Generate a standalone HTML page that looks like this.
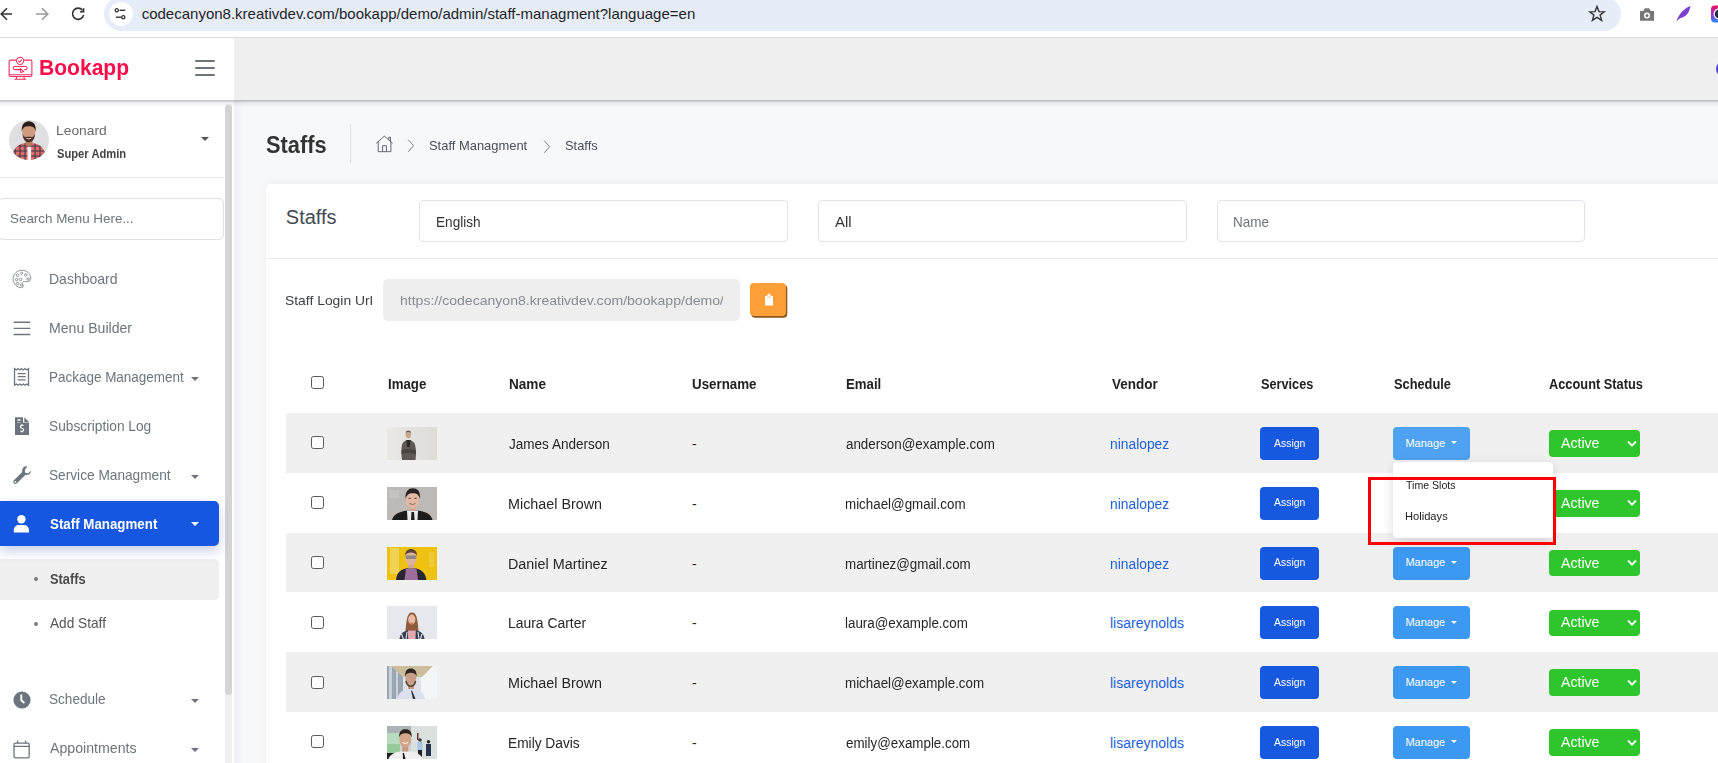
<!DOCTYPE html>
<html><head><meta charset="utf-8">
<style>
html,body{margin:0;padding:0;width:1718px;height:763px;overflow:hidden;background:#f6f8fc;font-family:"Liberation Sans",sans-serif;}
.a{position:absolute;}
.t{position:absolute;white-space:nowrap;line-height:1;font-family:"Liberation Sans",sans-serif;z-index:5;}
.cb{position:absolute;width:11px;height:11px;border:1.3px solid #5a5a5a;border-radius:2.5px;background:#fff;z-index:4;}
.row{position:absolute;left:286px;width:1432px;height:59.8px;}
.g{background:#f0f0f0;}
.thumb{position:absolute;left:387px;width:50px;height:33px;z-index:4;overflow:hidden;}
.assign{position:absolute;left:1260px;width:59px;height:33px;background:#1758e0;border-radius:4px;z-index:4;}
.manage{position:absolute;left:1393px;width:77px;height:33px;background:#3d98f2;border-radius:4px;z-index:4;}
.mcaret{position:absolute;left:1450.5px;margin-top:-0.8px;width:0;height:0;border-left:3px solid transparent;border-right:3px solid transparent;border-top:3.5px solid #fff;z-index:6;}
.active{position:absolute;left:1549px;width:91px;height:26.6px;background:#2fc52c;border-radius:4px;z-index:4;}
.chev{position:absolute;left:1627px;z-index:6;}
.caret{position:absolute;width:0;height:0;border-left:4px solid transparent;border-right:4px solid transparent;border-top:4.5px solid #6c757d;z-index:5;}
.inp{position:absolute;top:200px;height:40px;border:1px solid #e1e3ea;border-radius:4px;background:#fff;}
.mi{position:absolute;left:12px;z-index:5;}
</style></head><body>
<!-- ================= BROWSER BAR ================= -->
<div class="a" style="left:0;top:0;width:1718px;height:37px;background:#fff;"></div>
<div class="a" style="left:0;top:37px;width:1718px;height:1px;background:#d9dbd9;"></div>
<svg class="a" style="left:0;top:6px" width="100" height="16" viewBox="0 0 100 16">
  <path d="M12 8H1.5M7 2.2L1.2 8L7 13.8" stroke="#333" stroke-width="1.6" fill="none" stroke-linecap="butt"/>
  <path d="M36 8H47.5M42 2.2L47.8 8L42 13.8" stroke="#9a9a9a" stroke-width="1.6" fill="none"/>
  <path d="M82.5 4.2A5.6 5.6 0 1 0 83.6 9" stroke="#333" stroke-width="1.6" fill="none"/>
  <path d="M83.6 2.2V5.8H80" stroke="#333" stroke-width="1.6" fill="none"/>
</svg>
<div class="a" style="left:104px;top:-3px;width:1517px;height:34px;background:#e6ecf8;border-radius:17px;"></div>
<div class="a" style="left:109px;top:2px;width:24px;height:24px;background:#fff;border-radius:50%;"></div>
<svg class="a" style="left:113px;top:6px" width="16" height="16" viewBox="0 0 16 16">
  <circle cx="3.8" cy="4.3" r="1.6" stroke="#333" stroke-width="1.3" fill="none"/>
  <path d="M6.6 4.3H12.3" stroke="#333" stroke-width="1.4"/>
  <circle cx="10.3" cy="11.2" r="1.6" stroke="#333" stroke-width="1.3" fill="none"/>
  <path d="M2.8 11.2H8.2" stroke="#333" stroke-width="1.4"/>
</svg>
<svg class="a" style="left:1588px;top:5px" width="18" height="17" viewBox="0 0 18 17">
  <path d="M9 1.5L11 6.6L16.3 6.8L12.1 10.1L13.6 15.3L9 12.3L4.4 15.3L5.9 10.1L1.7 6.8L7 6.6Z" stroke="#333" stroke-width="1.4" fill="none" stroke-linejoin="miter"/>
</svg>
<svg class="a" style="left:1639px;top:7px" width="16" height="15" viewBox="0 0 16 15">
  <path d="M1 4H4.3L6 1.2H10L11.7 4H15V13.8H1Z" fill="#777"/>
  <circle cx="8" cy="8.6" r="3" fill="#fff"/><circle cx="8" cy="8.6" r="1.5" fill="#777"/>
</svg>
<svg class="a" style="left:1675px;top:5px" width="17" height="18" viewBox="0 0 17 18">
  <path d="M15.5 1C11 2.5 6 6.5 2.5 13.5L1.2 17C3 14.5 5 13 7.5 12.5C11.5 11 14.5 7 15.5 1Z" fill="#7c3fd1"/>
</svg>
<svg class="a" style="left:1710px;top:5px" width="8" height="18" viewBox="0 0 8 18">
  <defs><linearGradient id="ig" x1="0" y1="0" x2="0" y2="1"><stop offset="0" stop-color="#f0145a"/><stop offset="0.5" stop-color="#a02ad8"/><stop offset="1" stop-color="#1e90ff"/></linearGradient></defs>
  <rect x="1" y="0.5" width="16" height="17" rx="4" fill="url(#ig)"/>
  <circle cx="9" cy="9" r="5.5" fill="#fff"/><circle cx="9" cy="9" r="4.3" fill="#263040"/>
</svg>
<!-- ================= APP CHROME ================= -->
<div class="a" style="left:0;top:38px;width:234px;height:725px;background:#fff;"></div>
<div class="a" style="left:234px;top:38px;width:1484px;height:62px;background:#f0f0f0;"></div>
<div class="a" style="left:234px;top:100px;width:1484px;height:663px;background:#f6f8fc;"></div>
<div class="a" style="left:234px;top:100px;width:10px;height:663px;background:linear-gradient(90deg,rgba(0,0,40,0.035),rgba(0,0,40,0));"></div>
<div class="a" style="left:0;top:100px;width:1718px;height:7px;z-index:3;background:linear-gradient(180deg,rgba(40,45,60,0.30) 0,rgba(40,45,60,0.26) 1px,rgba(40,45,60,0.13) 2px,rgba(40,45,60,0.06) 3.5px,rgba(40,45,60,0) 7px);"></div>
<div class="a" style="left:1716px;top:60px;width:18px;height:18px;border:2px solid #4b45d6;border-radius:50%;box-sizing:border-box;"></div>
<!-- logo -->
<svg class="a" style="left:8px;top:56px;z-index:5" width="26" height="26" viewBox="0 0 26 26">
  <g stroke="#ff2c5e" stroke-width="1.05" fill="none" stroke-linecap="round" stroke-linejoin="round">
    <path d="M8 4.1H2.6C1.7 4.1 1.1 4.7 1.1 5.6V19C1.1 19.8 1.7 20.4 2.6 20.4H22.4C23.3 20.4 23.9 19.8 23.9 19V5.6C23.9 4.7 23.3 4.1 22.4 4.1H16.3"/>
    <path d="M1.3 18.8H23.7"/>
    <circle cx="12.1" cy="4.8" r="3.6"/>
    <path d="M10.6 5.2L11.7 6.1L13.6 3.8"/>
    <path d="M12.3 13.6H6.7C5.8 13.6 5.2 12.9 5.2 12C5.2 11.1 5.8 10.4 6.7 10.4H17.6C18.5 10.4 19.1 11.1 19.1 12C19.1 12.9 18.5 13.6 17.6 13.6H16.8"/>
    <path d="M12.2 12.6L12.6 16.4L15.8 15.6Z"/>
    <path d="M8.4 20.4V23M16.1 20.4V23M6.7 23.3H17.8"/>
  </g>
</svg>
<div class="a" style="left:195px;top:60.4px;width:20px;height:2px;background:#6c757d;border-radius:1px;"></div>
<div class="a" style="left:195px;top:67.1px;width:20px;height:2px;background:#6c757d;border-radius:1px;"></div>
<div class="a" style="left:195px;top:73.9px;width:20px;height:2px;background:#6c757d;border-radius:1px;"></div>
<!-- avatar -->
<svg class="a" style="left:9px;top:120px" width="40" height="40" viewBox="0 0 40 40">
  <defs><clipPath id="av"><circle cx="20" cy="20" r="20"/></clipPath>
  <pattern id="plaid" width="5" height="5" patternUnits="userSpaceOnUse"><rect width="5" height="5" fill="#e36a6a"/><rect x="0" y="0" width="2" height="5" fill="#5b4a55" opacity="0.75"/><rect x="0" y="0" width="5" height="2" fill="#4a3a45" opacity="0.55"/></pattern>
  <filter id="avb"><feGaussianBlur stdDeviation="0.35"/></filter></defs>
  <g clip-path="url(#av)">
    <rect width="40" height="40" fill="#e0e0e2"/>
    <g filter="url(#avb)">
    <path d="M3 40C3 30 7 25.5 14 23.5L20 22.5L26 23.5C33 25.5 37 30 37 40Z" fill="url(#plaid)"/>
    <path d="M18.3 27H22.2L22 40H18.6Z" fill="#f2f2f2"/>
    <path d="M16.5 19H23.5V25L20 27L16.5 25Z" fill="#b47c62"/>
    <ellipse cx="19.8" cy="11.5" rx="6.6" ry="8.2" fill="#d09a7c"/>
    <path d="M13.6 13.5C13.8 19 15.6 21.8 19.8 22.2C24 21.8 25.8 19 26 13.5C25.2 16 24.2 17.2 22.4 17C21 16.8 18.6 16.8 17.2 17C15.4 17.2 14.4 16 13.6 13.5Z" fill="#3a2620" opacity="0.9"/>
    <path d="M12.8 12C12.2 4.5 15.5 1.2 19.8 1.2C24.3 1.2 27.4 4.5 26.8 12C26 8 24.5 6.3 19.8 6.3C15 6.3 13.6 8 12.8 12Z" fill="#2a1c17"/>
    <path d="M17.4 18.3Q19.8 19.6 22.2 18.3" stroke="#f4e4dc" stroke-width="0.9" fill="none"/>
    </g>
  </g>
</svg>
<div class="caret" style="left:201px;top:136.5px;border-top-color:#555;"></div>
<div class="a" style="left:0;top:177px;width:224px;height:1px;background:#e9e9ef;"></div>
<div class="a" style="left:-2px;top:198px;width:224px;height:40px;border:1px solid #dfe0e8;border-radius:5px;"></div>
<!-- scrollbar -->
<div class="a" style="left:225px;top:104px;width:7px;height:659px;background:#f0f0f0;"></div>
<div class="a" style="left:225px;top:105px;width:7px;height:590px;background:#d4d4d4;border-radius:4px;"></div>
<!-- menu icons -->
<svg class="mi" style="top:269px" width="20" height="20" viewBox="0 0 20 20">
  <g stroke="#858b92" stroke-width="0.9" fill="none">
    <path d="M10 1.3C5 1.3 1.2 5 1.2 9.8C1.2 15 5 18.7 9.6 18.7C11.6 18.7 11.4 16.8 10.6 15.6C9.6 14.3 10.4 12.4 12.2 12.6H15.6C17.6 12.6 18.8 11.2 18.8 9.6C18.8 5 15 1.3 10 1.3Z"/>
    <circle cx="5.6" cy="6.3" r="1.3"/><circle cx="9.7" cy="4.3" r="1.1"/><circle cx="13.8" cy="5.9" r="1.3"/>
    <circle cx="4.6" cy="10.6" r="1.2"/><circle cx="8.6" cy="10.5" r="1.3"/><circle cx="5.7" cy="14.5" r="1.3"/><circle cx="9.7" cy="16" r="1.2"/><circle cx="16.1" cy="10" r="1.2"/>
  </g>
</svg>
<svg class="mi" style="top:321px" width="20" height="16" viewBox="0 0 20 16">
  <path d="M1.7 1.3H18.2M1.7 7.4H18.2M1.7 13.5H18.2" stroke="#6c757d" stroke-width="1.4"/>
</svg>
<svg class="mi" style="top:367px" width="20" height="20" viewBox="0 0 20 20">
  <g stroke="#6c757d" stroke-width="1.3" fill="none">
    <path d="M2.5 18.2V1.6L4.3 3L6 1.6L7.8 3L9.5 1.6L11.3 3L13 1.6L14.8 3L16.5 1.6V18.2L14.8 17L13 18.2L11.3 17L9.5 18.2L7.8 17L6 18.2L4.3 17Z"/>
    <path d="M5.7 6.6H13.7M5.7 9.7H13.7M5.7 12.8H13.7"/>
  </g>
</svg>
<svg class="mi" style="top:416px" width="20" height="20" viewBox="0 0 20 20">
  <path d="M3 1.3H11V6.6H17V18.9H3Z" fill="#6c757d"/>
  <path d="M12.3 1.3L17 6H12.3Z" fill="#6c757d"/>
  <path d="M5.5 3.2H8.5V4.8H5.5ZM5.5 5.9H8.5V6.6H5.5Z" fill="#fff"/>
  <path d="M11.6 9.5C10 8.8 8.3 9.4 8.4 10.9C8.5 12.5 11.7 12 11.7 13.8C11.7 15.3 9.9 15.7 8.3 14.9M10 8.1V9.1M10 15.3V16.6" stroke="#fff" stroke-width="1.1" fill="none"/>
</svg>
<svg class="mi" style="top:465px" width="20" height="20" viewBox="0 0 20 20">
  <path d="M14.5 1.2C11.5 1.3 9.6 4 10.3 6.9L1.9 15.3C1.1 16.1 1.1 17.5 1.9 18.3C2.7 19.1 4.1 19.1 4.9 18.3L13.3 9.9C16.2 10.6 19 8.7 19 5.7L16.2 8.3L13.3 7.9L12.7 5.1L15.4 1.6C15.1 1.3 14.8 1.2 14.5 1.2Z" fill="#6c757d"/>
  <circle cx="3.4" cy="16.8" r="0.9" fill="#fff"/>
</svg>
<div class="a" style="left:0;top:501px;width:219px;height:45px;background:#1557e0;border-radius:0 5px 5px 0;box-shadow:0 5px 12px rgba(30,55,150,0.24);z-index:2;"></div>
<svg class="mi" style="top:514px;left:13px" width="18" height="20" viewBox="0 0 18 20">
  <circle cx="8.4" cy="5.2" r="4.2" fill="#fff"/>
  <path d="M0.8 18.6V16.5C0.8 13 3 11 6.2 11H10.6C13.8 11 16 13 16 16.5V18.6Z" fill="#fff"/>
</svg>
<div class="a" style="left:0;top:559px;width:219px;height:40.5px;background:#f0f0f0;border-radius:0 5px 5px 0;"></div>
<div class="a" style="left:34px;top:577px;width:4px;height:4px;background:#7a7a7a;border-radius:50%;z-index:5;"></div>
<div class="a" style="left:34px;top:621.5px;width:4px;height:4px;background:#7a7a7a;border-radius:50%;z-index:5;"></div>
<svg class="mi" style="top:691px;left:12.5px" width="18" height="18" viewBox="0 0 18 18">
  <circle cx="9" cy="9" r="8.6" fill="#6c757d"/>
  <path d="M8.3 3.6V9.3L11.4 12" stroke="#fff" stroke-width="1.9" fill="none"/>
</svg>
<svg class="mi" style="top:740px;left:13px" width="18" height="19" viewBox="0 0 18 19">
  <g stroke="#6c757d" stroke-width="1.3" fill="none">
    <rect x="1" y="3.2" width="15.2" height="14.6" rx="1.4"/>
    <path d="M1 6.3H16.2M4.6 0.5V3.6M12.6 0.5V3.6"/>
  </g>
</svg>
<div class="caret" style="left:191px;top:376.5px;"></div>
<div class="caret" style="left:191px;top:474.5px;"></div>
<div class="caret" style="left:191px;top:522px;border-top-color:#fff;"></div>
<div class="caret" style="left:191px;top:698.5px;"></div>
<div class="caret" style="left:191px;top:747.5px;"></div>
<!-- ================= PAGE HEADER ================= -->
<div class="a" style="left:350px;top:124px;width:1px;height:39px;background:#dedfe3;"></div>
<svg class="a" style="left:375px;top:134px" width="19" height="19" viewBox="0 0 19 19">
  <g stroke="#5d6269" stroke-width="0.95" fill="none">
    <path d="M1.3 9.3L9.3 2.1L17.6 9.3M3.2 7.7V17.7H15.9V7.7M7.6 17.7V11.7H11.4V17.7M13.8 5.7V3.2H15.5V7.2"/>
  </g>
</svg>
<svg class="a" style="left:407px;top:139px" width="8" height="14" viewBox="0 0 8 14">
  <path d="M1.2 0.6L6.6 6.7L1.2 12.8" stroke="#7a7f86" stroke-width="1" fill="none"/>
</svg>
<svg class="a" style="left:542.5px;top:139.5px" width="8" height="14" viewBox="0 0 8 14">
  <path d="M1.2 0.6L6.6 6.7L1.2 12.8" stroke="#7a7f86" stroke-width="1" fill="none"/>
</svg>
<!-- ================= CARD ================= -->
<div class="a" style="left:266px;top:184px;width:1470px;height:600px;background:#fff;border-radius:5px;box-shadow:0 -2px 10px rgba(20,30,60,0.035);"></div>
<div class="a" style="left:266px;top:258px;width:1452px;height:1px;background:#e8e8ec;"></div>
<div class="inp" style="left:419px;width:367px;"></div>
<div class="inp" style="left:818px;width:367px;"></div>
<div class="inp" style="left:1217px;width:366px;"></div>
<div class="a" style="left:383px;top:279px;width:357px;height:42px;background:#eeeeee;border-radius:5px;z-index:4;"></div>
<div class="a" style="left:723px;top:285px;width:12px;height:30px;background:#eeeeee;z-index:7;"></div>
<div class="a" style="left:750px;top:283px;width:36.4px;height:33.2px;background:#ff9f38;border-radius:4px;box-shadow:1.3px 1.7px 0 #8d561c;z-index:4;"></div>
<svg class="a" style="left:764px;top:293px;z-index:5" width="10" height="14" viewBox="0 0 10 14">
  <path d="M1 3H9V12.5H1Z" fill="#fff"/><path d="M3 1.8H7V3.6H3Z" fill="#fff"/><path d="M4.3 0.6H5.7V2H4.3Z" fill="#fff"/>
  <path d="M3.2 4.2H6.8" stroke="#ff9f38" stroke-width="0.7"/>
</svg>
<!-- ================= TABLE ================= -->
<div class="cb" style="left:311px;top:376px;"></div>
<div class="row g" style="top:413.0px;"></div>
<div class="cb" style="left:311px;top:436.3px;"></div>
<div class="thumb" style="top:427.0px;"><svg width="50" height="33" viewBox="0 0 50 33"><defs><filter id="b0" x="-10%" y="-10%" width="120%" height="120%"><feGaussianBlur stdDeviation="0.5"/></filter><linearGradient id="jg" x1="0" x2="1"><stop offset="0" stop-color="#ebe9e5"/><stop offset="1" stop-color="#dedcd8"/></linearGradient></defs><rect width="50" height="33" fill="url(#jg)"/><g filter="url(#b0)"><path d="M15 33C14 26 14 17 16.5 15L19.5 13H23.5L26.5 15C29 17 29.5 26 28.5 33Z" fill="#5f5955"/><path d="M19.5 13H23.5L22.8 20H20.2Z" fill="#2a2a2a"/><path d="M14.5 23.5C18 21.8 25 21.8 29 23.5V27C25 25.5 18 25.5 14.5 27Z" fill="#4a4541"/><ellipse cx="21.4" cy="7.6" rx="2.7" ry="3.6" fill="#c9a58e"/><path d="M18.7 6.6C18.7 4.2 20 3.6 21.4 3.6C22.8 3.6 24.1 4.2 24.1 6.6C23.4 5.4 22.5 5 21.4 5C20.3 5 19.4 5.4 18.7 6.6Z" fill="#6f6055"/></g></svg></div>
<div class="assign" style="top:427.0px;"></div>
<div class="manage" style="top:427.0px;background:#4fa2f2;"></div>
<div class="mcaret" style="top:442.2px;"></div>
<div class="active" style="top:430.2px;"></div>
<svg class="chev" style="top:439.5px;" width="10" height="8" viewBox="0 0 10 8"><path d="M1 1.5L5 5.6L9 1.5" stroke="#fff" stroke-width="1.8" fill="none"/></svg>
<div class="cb" style="left:311px;top:496.1px;"></div>
<div class="thumb" style="top:486.8px;"><svg width="50" height="33" viewBox="0 0 50 33"><defs><filter id="b1" x="-10%" y="-10%" width="120%" height="120%"><feGaussianBlur stdDeviation="0.5"/></filter></defs><rect width="50" height="33" fill="#bcb9b6"/><g filter="url(#b1)"><rect x="2" y="3" width="10" height="8" fill="#c9c6c3" opacity="0.7"/><path d="M5 33C6 28.5 10 25.5 17 24L25.5 23L34 24C41 25.5 44.5 28.5 45.5 33Z" fill="#1f1f1f"/><path d="M20 23.5H31L30.5 33H20.5Z" fill="#ebebeb"/><path d="M24.5 25H27L27.6 33H24Z" fill="#1a1a1a"/><rect x="22.5" y="19" width="6" height="5" fill="#d2a894"/><ellipse cx="25.5" cy="12.3" rx="6.8" ry="8.8" fill="#e0b8a4"/><path d="M18.6 12C18 4.5 21.5 1.3 25.8 1.3C30 1.3 33.8 4 33 12C32 8 30 6.3 25.8 6.3C21.5 6.3 19.8 8 18.6 12Z" fill="#2a2220"/><path d="M21.5 11.3H23.8M27.3 11.3H29.6" stroke="#5a4036" stroke-width="1"/><path d="M22.5 16.5Q25.5 18.5 28.5 16.5" stroke="#8a5a4a" stroke-width="0.9" fill="none"/></g></svg></div>
<div class="assign" style="top:486.8px;"></div>
<div class="active" style="top:490.0px;"></div>
<svg class="chev" style="top:499.3px;" width="10" height="8" viewBox="0 0 10 8"><path d="M1 1.5L5 5.6L9 1.5" stroke="#fff" stroke-width="1.8" fill="none"/></svg>
<div class="row g" style="top:532.6px;"></div>
<div class="cb" style="left:311px;top:555.9px;"></div>
<div class="thumb" style="top:546.6px;"><svg width="50" height="33" viewBox="0 0 50 33"><defs><filter id="b2" x="-10%" y="-10%" width="120%" height="120%"><feGaussianBlur stdDeviation="0.5"/></filter></defs><rect width="50" height="33" fill="#f2c614"/><g filter="url(#b2)"><rect x="3" y="1" width="9" height="26" fill="#f7e7a0" opacity="0.55"/><rect x="42" y="5" width="5" height="15" fill="#f5dc6a" opacity="0.5"/><rect x="0" y="0" width="50" height="33" fill="#d9a800" opacity="0.12"/><path d="M9 33C9.5 27 12.5 23 18.5 21.5L24 20.5L29.5 21.5C35.5 23 38.5 27 39.5 33Z" fill="#2a2630"/><path d="M19 21.5H29.5L31 33H17.5Z" fill="#9d6e9c"/><rect x="21" y="16" width="6" height="5.5" fill="#d0a690"/><ellipse cx="24" cy="11" rx="5.6" ry="7.5" fill="#dcb49c"/><path d="M18.3 9C17.8 4 20.8 2 24 2C27.4 2 30.3 4 29.8 9C28.8 6.5 27 5.6 24 5.6C21 5.6 19.3 6.5 18.3 9Z" fill="#5c4232"/><rect x="18.8" y="8.6" width="10.6" height="3.4" rx="1" fill="#7a7a80" opacity="0.8"/></g></svg></div>
<div class="assign" style="top:546.6px;"></div>
<div class="manage" style="top:546.6px;background:#3d98f2;"></div>
<div class="mcaret" style="top:561.8px;"></div>
<div class="active" style="top:549.8px;"></div>
<svg class="chev" style="top:559.1px;" width="10" height="8" viewBox="0 0 10 8"><path d="M1 1.5L5 5.6L9 1.5" stroke="#fff" stroke-width="1.8" fill="none"/></svg>
<div class="cb" style="left:311px;top:615.7px;"></div>
<div class="thumb" style="top:606.4px;"><svg width="50" height="33" viewBox="0 0 50 33"><defs><filter id="b3" x="-10%" y="-10%" width="120%" height="120%"><feGaussianBlur stdDeviation="0.5"/></filter></defs><rect width="50" height="33" fill="#e6e8ee"/><g filter="url(#b3)"><path d="M18.5 25C19.5 12 20.5 6.5 25 6.5C29.5 6.5 30.5 12 31.5 25Z" fill="#8e5c3a"/><path d="M12.5 33C13 28 16 25.5 20.5 24.5H29.5C34 25.5 37 28 37.5 33Z" fill="#3a3e52"/><path d="M14.5 28L16.5 33M20 26L19 33M31 26L32 33M35 28L33.5 33" stroke="#dfe3ec" stroke-width="1.1"/><path d="M20.8 24.5H28.8L28.5 33H21.2Z" fill="#e3aab0"/><ellipse cx="24.8" cy="13.5" rx="3.6" ry="5" fill="#e8bca4"/><path d="M23.3 17.2H26.3" stroke="#c8505a" stroke-width="0.9"/></g></svg></div>
<div class="assign" style="top:606.4px;"></div>
<div class="manage" style="top:606.4px;background:#3d98f2;"></div>
<div class="mcaret" style="top:621.6px;"></div>
<div class="active" style="top:609.6px;"></div>
<svg class="chev" style="top:618.9px;" width="10" height="8" viewBox="0 0 10 8"><path d="M1 1.5L5 5.6L9 1.5" stroke="#fff" stroke-width="1.8" fill="none"/></svg>
<div class="row g" style="top:652.2px;"></div>
<div class="cb" style="left:311px;top:675.5px;"></div>
<div class="thumb" style="top:666.2px;"><svg width="50" height="33" viewBox="0 0 50 33"><defs><filter id="b4" x="-10%" y="-10%" width="120%" height="120%"><feGaussianBlur stdDeviation="0.6"/></filter></defs><rect width="50" height="33" fill="#dfe3e8"/><g filter="url(#b4)"><path d="M0 0H16V33H0Z" fill="#9aa6b3"/><path d="M2 0H5V33H2ZM9 2H11V33H9Z" fill="#c9d1da"/><path d="M34 0H50V33H34Z" fill="#f4f5f6"/><path d="M4 0H46L35 11H16Z" fill="#cdbd9c"/><path d="M10 33C11 27.5 15 24 20.5 23H28C33.5 24 37 27.5 38 33Z" fill="#dcdfee"/><path d="M25 24.5L28.5 33H26L24 24.5Z" fill="#2a2e36"/><rect x="21" y="18" width="6" height="5" fill="#c49a86"/><ellipse cx="23.8" cy="12.5" rx="5.5" ry="7.5" fill="#c9a08a"/><path d="M18.2 10.5C17.8 4.5 20.5 2.6 23.8 2.6C27.2 2.6 30 4.5 29.5 10.5C28.5 7.5 26.5 6.8 23.8 6.8C21.2 6.8 19.2 7.5 18.2 10.5Z" fill="#2f2520"/><path d="M19 15C19.8 19 22 20.2 23.8 20.2C25.6 20.2 27.8 19 28.6 15" stroke="#5a4436" stroke-width="1.5" fill="none"/></g></svg></div>
<div class="assign" style="top:666.2px;"></div>
<div class="manage" style="top:666.2px;background:#3d98f2;"></div>
<div class="mcaret" style="top:681.4px;"></div>
<div class="active" style="top:669.4px;"></div>
<svg class="chev" style="top:678.7px;" width="10" height="8" viewBox="0 0 10 8"><path d="M1 1.5L5 5.6L9 1.5" stroke="#fff" stroke-width="1.8" fill="none"/></svg>
<div class="cb" style="left:311px;top:735.3px;"></div>
<div class="thumb" style="top:726.0px;"><svg width="50" height="33" viewBox="0 0 50 33"><defs><filter id="b5" x="-10%" y="-10%" width="120%" height="120%"><feGaussianBlur stdDeviation="0.55"/></filter></defs><rect width="50" height="33" fill="#cdd6d3"/><g filter="url(#b5)"><rect x="0" y="0" width="50" height="7" fill="#aab3b6"/><rect x="24" y="0" width="26" height="33" fill="#d9e0dd"/><rect x="0" y="7" width="13" height="20" fill="#b9dcc0"/><rect x="0" y="18" width="13" height="9" fill="#7fbf7f" opacity="0.6"/><rect x="0" y="27" width="12" height="6" fill="#242424"/><rect x="30" y="7" width="1.5" height="7" fill="#7a2a2a"/><path d="M30.5 16H35.5V25H30.5Z" fill="#a9c6e6"/><path d="M31 24H35V31H31Z" fill="#202020"/><circle cx="33" cy="14" r="1.7" fill="#3a3030"/><path d="M39 18H44V30H39Z" fill="#28324d"/><circle cx="41.5" cy="15.8" r="1.7" fill="#2a2222"/><path d="M1.5 33C2.5 29 7 26.5 12.5 25.5H25C30.5 26.5 34.5 29 35.5 33Z" fill="#f2eff1"/><path d="M17 27L18.5 33H16L15.7 27Z" fill="#1e1e1e"/><rect x="15.3" y="19.5" width="6" height="6" fill="#c8987e"/><ellipse cx="18.3" cy="13.5" rx="6" ry="8" fill="#d4a68c"/><path d="M12.3 11.5C11.8 5 15 3.3 18.5 3.3C22 3.3 25.3 5 24.6 11.5C23.4 8 21.5 7.3 18.5 7.3C15.5 7.3 13.5 8 12.3 11.5Z" fill="#2a2018"/><path d="M15.5 16.5Q18.3 18.5 21.1 16.5" stroke="#fff" stroke-width="1" fill="none"/></g></svg></div>
<div class="assign" style="top:726.0px;"></div>
<div class="manage" style="top:726.0px;background:#3d98f2;"></div>
<div class="mcaret" style="top:741.2px;"></div>
<div class="active" style="top:729.2px;"></div>
<svg class="chev" style="top:738.5px;" width="10" height="8" viewBox="0 0 10 8"><path d="M1 1.5L5 5.6L9 1.5" stroke="#fff" stroke-width="1.8" fill="none"/></svg>
<!-- dropdown -->
<div class="a" style="left:1393px;top:462.3px;width:160px;height:75.7px;background:#fff;border-radius:4px;box-shadow:0 3px 12px rgba(0,0,0,0.13);z-index:20;"></div>
<div class="a" style="left:1368px;top:477px;width:182px;height:62px;border:3px solid #ff0000;z-index:22;"></div>
<div class=t style='left:141.70px;top:5.90px;font-size:15px;font-weight:400;color:#1f1f1f;'>codecanyon8.kreativdev.com/bookapp/demo/admin/staff-managment?language=en</div>
<div class=t style='left:39.14px;top:56.98px;font-size:22px;font-weight:700;color:#ff0d4a;transform:scaleX(0.9570);transform-origin:0 0;'>Bookapp</div>
<div class=t style='left:56.27px;top:124.47px;font-size:13.5px;font-weight:400;color:#6a6a6a;transform:scaleX(1.0250);transform-origin:0 0;'>Leonard</div>
<div class=t style='left:57.30px;top:148.42px;font-size:12.5px;font-weight:700;color:#444;transform:scaleX(0.8948);transform-origin:0 0;'>Super Admin</div>
<div class=t style='left:10.21px;top:212.47px;font-size:13.5px;font-weight:400;color:#6c757d;transform:scaleX(0.9919);transform-origin:0 0;'>Search Menu Here...</div>
<div class=t style='left:49.23px;top:272.13px;font-size:14.5px;font-weight:400;color:#6c757d;transform:scaleX(0.9667);transform-origin:0 0;'>Dashboard</div>
<div class=t style='left:49.23px;top:321.13px;font-size:14.5px;font-weight:400;color:#6c757d;transform:scaleX(0.9718);transform-origin:0 0;'>Menu Builder</div>
<div class=t style='left:49.27px;top:370.23px;font-size:14.5px;font-weight:400;color:#6c757d;transform:scaleX(0.9285);transform-origin:0 0;'>Package Management</div>
<div class=t style='left:49.25px;top:418.93px;font-size:14.5px;font-weight:400;color:#6c757d;transform:scaleX(0.9467);transform-origin:0 0;'>Subscription Log</div>
<div class=t style='left:49.26px;top:468.13px;font-size:14.5px;font-weight:400;color:#6c757d;transform:scaleX(0.9430);transform-origin:0 0;'>Service Managment</div>
<div class=t style='left:50.20px;top:516.93px;font-size:14.5px;font-weight:700;color:#ffffff;transform:scaleX(0.9188);transform-origin:0 0;'>Staff Managment</div>
<div class=t style='left:50.20px;top:572.13px;font-size:14.5px;font-weight:700;color:#4a4a4a;transform:scaleX(0.8825);transform-origin:0 0;'>Staffs</div>
<div class=t style='left:50.20px;top:616.43px;font-size:14.5px;font-weight:400;color:#555;transform:scaleX(0.9417);transform-origin:0 0;'>Add Staff</div>
<div class=t style='left:49.26px;top:692.43px;font-size:14.5px;font-weight:400;color:#6c757d;transform:scaleX(0.9356);transform-origin:0 0;'>Schedule</div>
<div class=t style='left:50.20px;top:741.43px;font-size:14.5px;font-weight:400;color:#6c757d;transform:scaleX(0.9764);transform-origin:0 0;'>Appointments</div>
<div class=t style='left:265.55px;top:133.93px;font-size:23px;font-weight:700;color:#333333;transform:scaleX(0.9468);transform-origin:0 0;'>Staffs</div>
<div class=t style='left:429.41px;top:138.70px;font-size:13px;font-weight:400;color:#4a4f57;transform:scaleX(0.9939);transform-origin:0 0;'>Staff Managment</div>
<div class=t style='left:565.01px;top:138.70px;font-size:13px;font-weight:400;color:#4a4f57;transform:scaleX(0.9906);transform-origin:0 0;'>Staffs</div>
<div class=t style='left:285.80px;top:206.77px;font-size:20px;font-weight:400;color:#444a52;'>Staffs</div>
<div class=t style='left:435.75px;top:214.90px;font-size:14.3px;font-weight:400;color:#333;transform:scaleX(0.9511);transform-origin:0 0;'>English</div>
<div class=t style='left:835.30px;top:214.90px;font-size:14.3px;font-weight:400;color:#333;transform:scaleX(1.0467);transform-origin:0 0;'>All</div>
<div class=t style='left:1233.05px;top:214.90px;font-size:14.3px;font-weight:400;color:#6c757d;transform:scaleX(0.9459);transform-origin:0 0;'>Name</div>
<div class=t style='left:285.27px;top:294.47px;font-size:13.5px;font-weight:400;color:#3a3f46;transform:scaleX(1.0286);transform-origin:0 0;'>Staff Login Url</div>
<div class=t style='left:399.77px;top:294.19px;font-size:13.6px;font-weight:400;color:#868c93;transform:scaleX(1.0338);transform-origin:0 0;'>https://codecanyon8.kreativdev.com/bookapp/demo</div>
<div class=t style='left:719.80px;top:294.19px;font-size:13.6px;font-weight:400;color:#868c93;'>/</div>
<div class=t style='left:388.24px;top:376.06px;font-size:15.4px;font-weight:700;color:#222;transform:scaleX(0.8605);transform-origin:0 0;'>Image</div>
<div class=t style='left:509.22px;top:376.06px;font-size:15.4px;font-weight:700;color:#222;transform:scaleX(0.8829);transform-origin:0 0;'>Name</div>
<div class=t style='left:692.03px;top:376.06px;font-size:15.4px;font-weight:700;color:#222;transform:scaleX(0.8671);transform-origin:0 0;'>Username</div>
<div class=t style='left:846.24px;top:376.06px;font-size:15.4px;font-weight:700;color:#222;transform:scaleX(0.8590);transform-origin:0 0;'>Email</div>
<div class=t style='left:1112.00px;top:376.06px;font-size:15.4px;font-weight:700;color:#222;transform:scaleX(0.8769);transform-origin:0 0;'>Vendor</div>
<div class=t style='left:1260.60px;top:376.06px;font-size:15.4px;font-weight:700;color:#222;transform:scaleX(0.8254);transform-origin:0 0;'>Services</div>
<div class=t style='left:1393.50px;top:376.06px;font-size:15.4px;font-weight:700;color:#222;transform:scaleX(0.8324);transform-origin:0 0;'>Schedule</div>
<div class=t style='left:1549.00px;top:376.06px;font-size:15.4px;font-weight:700;color:#222;transform:scaleX(0.8319);transform-origin:0 0;'>Account Status</div>
<div class=t style='left:509.00px;top:436.95px;font-size:14px;font-weight:400;color:#262626;transform:scaleX(0.9673);transform-origin:0 0;'>James Anderson</div>
<div class=t style='left:692.00px;top:436.95px;font-size:14px;font-weight:400;color:#262626;'>-</div>
<div class=t style='left:846.00px;top:436.95px;font-size:14px;font-weight:400;color:#262626;transform:scaleX(0.9548);transform-origin:0 0;'>anderson@example.com</div>
<div class=t style='left:1110.01px;top:436.95px;font-size:14px;font-weight:400;color:#1d5fdc;transform:scaleX(0.9881);transform-origin:0 0;'>ninalopez</div>
<div class=t style='left:1273.70px;top:437.59px;font-size:11px;font-weight:400;color:#ffffff;transform:scaleX(0.9485);transform-origin:0 0;'>Assign</div>
<div class=t style='left:1405.40px;top:437.59px;font-size:11px;font-weight:400;color:#ffffff;'>Manage</div>
<div class=t style='left:1561.00px;top:436.05px;font-size:14px;font-weight:400;color:#ffffff;transform:scaleX(1.0079);transform-origin:0 0;'>Active</div>
<div class=t style='left:507.98px;top:496.75px;font-size:14px;font-weight:400;color:#262626;transform:scaleX(1.0244);transform-origin:0 0;'>Michael Brown</div>
<div class=t style='left:692.00px;top:496.75px;font-size:14px;font-weight:400;color:#262626;'>-</div>
<div class=t style='left:845.05px;top:496.75px;font-size:14px;font-weight:400;color:#262626;transform:scaleX(0.9548);transform-origin:0 0;'>michael@gmail.com</div>
<div class=t style='left:1110.01px;top:496.75px;font-size:14px;font-weight:400;color:#1d5fdc;transform:scaleX(0.9881);transform-origin:0 0;'>ninalopez</div>
<div class=t style='left:1273.70px;top:497.39px;font-size:11px;font-weight:400;color:#ffffff;transform:scaleX(0.9485);transform-origin:0 0;'>Assign</div>
<div class=t style='left:1561.00px;top:495.85px;font-size:14px;font-weight:400;color:#ffffff;transform:scaleX(1.0079);transform-origin:0 0;'>Active</div>
<div class=t style='left:507.97px;top:556.55px;font-size:14px;font-weight:400;color:#262626;transform:scaleX(1.0260);transform-origin:0 0;'>Daniel Martinez</div>
<div class=t style='left:692.00px;top:556.55px;font-size:14px;font-weight:400;color:#262626;'>-</div>
<div class=t style='left:845.05px;top:556.55px;font-size:14px;font-weight:400;color:#262626;transform:scaleX(0.9548);transform-origin:0 0;'>martinez@gmail.com</div>
<div class=t style='left:1110.01px;top:556.55px;font-size:14px;font-weight:400;color:#1d5fdc;transform:scaleX(0.9881);transform-origin:0 0;'>ninalopez</div>
<div class=t style='left:1273.70px;top:557.19px;font-size:11px;font-weight:400;color:#ffffff;transform:scaleX(0.9485);transform-origin:0 0;'>Assign</div>
<div class=t style='left:1405.40px;top:557.19px;font-size:11px;font-weight:400;color:#ffffff;'>Manage</div>
<div class=t style='left:1561.00px;top:555.65px;font-size:14px;font-weight:400;color:#ffffff;transform:scaleX(1.0079);transform-origin:0 0;'>Active</div>
<div class=t style='left:508.01px;top:616.35px;font-size:14px;font-weight:400;color:#262626;transform:scaleX(0.9936);transform-origin:0 0;'>Laura Carter</div>
<div class=t style='left:692.00px;top:616.35px;font-size:14px;font-weight:400;color:#262626;'>-</div>
<div class=t style='left:845.05px;top:616.35px;font-size:14px;font-weight:400;color:#262626;transform:scaleX(0.9548);transform-origin:0 0;'>laura@example.com</div>
<div class=t style='left:1110.00px;top:616.35px;font-size:14px;font-weight:400;color:#1d5fdc;'>lisareynolds</div>
<div class=t style='left:1273.70px;top:616.99px;font-size:11px;font-weight:400;color:#ffffff;transform:scaleX(0.9485);transform-origin:0 0;'>Assign</div>
<div class=t style='left:1405.40px;top:616.99px;font-size:11px;font-weight:400;color:#ffffff;'>Manage</div>
<div class=t style='left:1561.00px;top:615.45px;font-size:14px;font-weight:400;color:#ffffff;transform:scaleX(1.0079);transform-origin:0 0;'>Active</div>
<div class=t style='left:507.98px;top:676.15px;font-size:14px;font-weight:400;color:#262626;transform:scaleX(1.0244);transform-origin:0 0;'>Michael Brown</div>
<div class=t style='left:692.00px;top:676.15px;font-size:14px;font-weight:400;color:#262626;'>-</div>
<div class=t style='left:845.05px;top:676.15px;font-size:14px;font-weight:400;color:#262626;transform:scaleX(0.9548);transform-origin:0 0;'>michael@example.com</div>
<div class=t style='left:1110.00px;top:676.15px;font-size:14px;font-weight:400;color:#1d5fdc;'>lisareynolds</div>
<div class=t style='left:1273.70px;top:676.79px;font-size:11px;font-weight:400;color:#ffffff;transform:scaleX(0.9485);transform-origin:0 0;'>Assign</div>
<div class=t style='left:1405.40px;top:676.79px;font-size:11px;font-weight:400;color:#ffffff;'>Manage</div>
<div class=t style='left:1561.00px;top:675.25px;font-size:14px;font-weight:400;color:#ffffff;transform:scaleX(1.0079);transform-origin:0 0;'>Active</div>
<div class=t style='left:508.02px;top:735.95px;font-size:14px;font-weight:400;color:#262626;transform:scaleX(0.9806);transform-origin:0 0;'>Emily Davis</div>
<div class=t style='left:692.00px;top:735.95px;font-size:14px;font-weight:400;color:#262626;'>-</div>
<div class=t style='left:846.00px;top:735.95px;font-size:14px;font-weight:400;color:#262626;transform:scaleX(0.9548);transform-origin:0 0;'>emily@example.com</div>
<div class=t style='left:1110.00px;top:735.95px;font-size:14px;font-weight:400;color:#1d5fdc;'>lisareynolds</div>
<div class=t style='left:1273.70px;top:736.59px;font-size:11px;font-weight:400;color:#ffffff;transform:scaleX(0.9485);transform-origin:0 0;'>Assign</div>
<div class=t style='left:1405.40px;top:736.59px;font-size:11px;font-weight:400;color:#ffffff;'>Manage</div>
<div class=t style='left:1561.00px;top:735.05px;font-size:14px;font-weight:400;color:#ffffff;transform:scaleX(1.0079);transform-origin:0 0;'>Active</div>
<div class=t style='left:1406.40px;top:479.59px;font-size:11px;font-weight:400;color:#222;transform:scaleX(0.9608);transform-origin:0 0;z-index:21;'>Time Slots</div>
<div class=t style='left:1405.39px;top:510.59px;font-size:11px;font-weight:400;color:#222;transform:scaleX(1.0122);transform-origin:0 0;z-index:21;'>Holidays</div>
</body></html>
